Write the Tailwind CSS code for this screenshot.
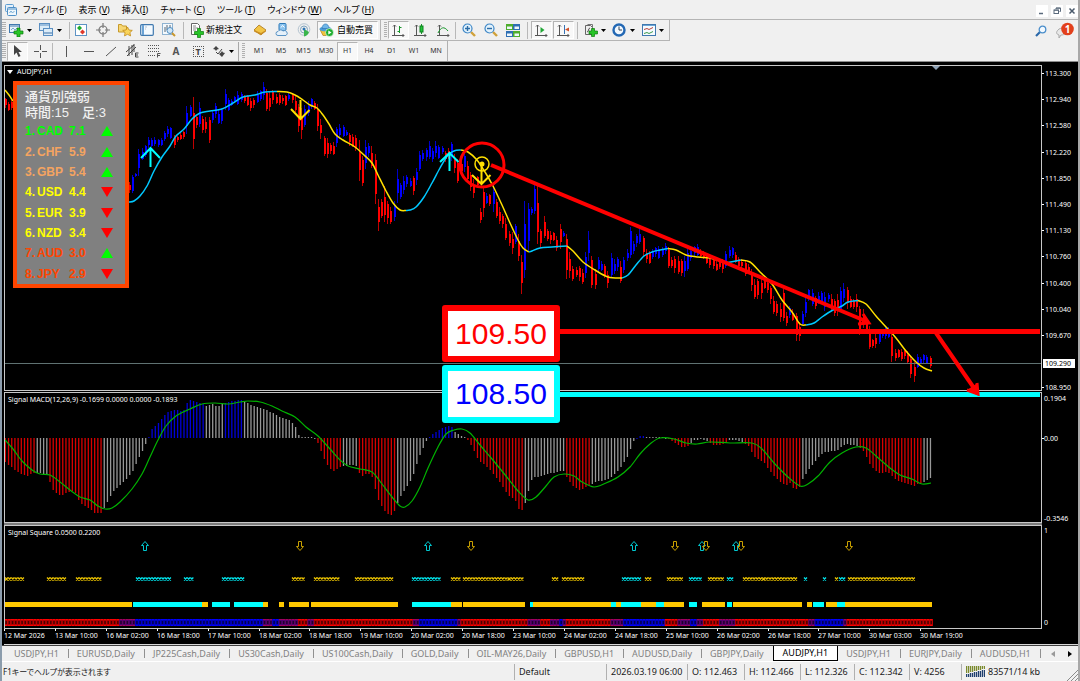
<!DOCTYPE html>
<html lang="ja">

<head>
    <meta charset="UTF-8">
    <meta name="viewport" content="width=device-width, initial-scale=1">
    <title>AUDJPY,H1</title>
    <script src="https://cdn.jsdelivr.net/npm/@tailwindcss/browser@4"></script>
</head>

<body class="h-screen overflow-hidden bg-[#f0f0f0] text-black font-['Noto_Sans','Noto_Sans_CJK_JP',sans-serif]">
<div class="h-full flex flex-col border-l-2 border-r-2 border-l-[#8b9cac] border-r-[#a8a8a8]">

    <!-- Menu bar -->
    <header class="h-[20px] shrink-0 flex items-center pl-[3px] border-b border-[#b4b4b4] bg-[#f0f0f0]">
        <svg class="w-[12px] h-[12px] mr-[6px]" viewBox="0 0 12 12" fill="none"><rect x=".5" y=".5" width="8" height="7" rx="1" fill="#e4f1fb" stroke="#5b9bd0"/><rect x="2.5" y="3.5" width="9" height="8" rx="1" fill="#eef7fd" stroke="#4f8fc6"/><path d="M3 5h8" stroke="#4f8fc6"/><path d="M4.500 9l1.500-2 1.500 2 2-2" stroke="#7aaed6"/></svg>
        <nav class="flex gap-[12px] text-[9px] leading-[12px] [font-feature-settings:'palt']">
            <button>ファイル (<u>F</u>)</button>
            <button>表示 (<u>V</u>)</button>
            <button>挿入(<u>I</u>)</button>
            <button>チャート (<u>C</u>)</button>
            <button>ツール (<u>T</u>)</button>
            <button>ウィンドウ (<u>W</u>)</button>
            <button>ヘルプ (<u>H</u>)</button>
        </nav>
        <div class="ml-auto flex gap-[3px] pt-[3px]">
            <button aria-label="最小化" class="w-[12px] h-[12px] bg-white"><svg viewBox="0 0 12 12"><path d="M3 8.500h4" stroke="#5a6a7c" stroke-width="1.500"/></svg></button>
            <button aria-label="元に戻す" class="w-[12px] h-[12px] bg-white"><svg viewBox="0 0 12 12" fill="none" stroke="#5a6a7c"><path d="M5 4V3h4.500v3.500H8.500"/><rect x="3" y="5" width="4.500" height="3.500"/><path d="M3 5.200h4.500M5 3.200h4.500"/></svg></button>
            <button aria-label="閉じる" class="w-[12px] h-[12px] bg-white"><svg viewBox="0 0 12 12"><path d="M3.500 3.500l5 5m0-5l-5 5" stroke="#4a5a6c" stroke-width="1.500"/></svg></button>
        </div>
    </header>

    <!-- Standard toolbar -->
    <div class="h-[21px] shrink-0 flex items-center justify-between">
        <div class="h-full flex items-center border-b border-r border-[#b4b4b4]">
            <span class="w-[4px] h-[16px] bg-[repeating-linear-gradient(#b0b0b0_0_1px,#f0f0f0_1px_2px)]"></span>
            <button aria-label="新規チャート" class="w-[30px] h-[20px] flex items-center pl-[3px] gap-[3px]">
                <svg class="w-[15px] h-[14px]" viewBox="0 0 15 14"><rect x=".5" y="1.500" width="10" height="8" fill="#e8f3fb" stroke="#3f78ae"/><path d="M1 3h9" stroke="#3f78ae"/><path d="M2 7l2-2 2 2 2-2" stroke="#7aa9d0" fill="none"/><path d="M8 5h3v3h3v3h-3v3H8v-3H5V8h3z" fill="#27c427" stroke="#0b7d0b" stroke-width=".7"/></svg>
                <svg class="w-[5px] h-[3px]" viewBox="0 0 5 3"><path d="M0 0h5L2.500 3z"/></svg>
            </button>
            <button aria-label="プロファイル" class="w-[30px] h-[20px] flex items-center pl-[3px] gap-[3px]">
                <svg class="w-[15px] h-[14px]" viewBox="0 0 15 14" stroke="#5a8fc2" fill="#dcecf8"><rect x=".5" y=".5" width="10" height="7"/><path d="M1 2h9"/><rect x="4.500" y="5.500" width="9" height="7"/><path d="M5 10h8" stroke="#3a6ea5"/></svg>
                <svg class="w-[5px] h-[3px]" viewBox="0 0 5 3"><path d="M0 0h5L2.500 3z"/></svg>
            </button>
            <span class="w-px h-[17px] ml-[3px] bg-[#b8b8b8]"></span>
            <button aria-label="気配値表示" class="w-[22px] h-[20px] grid place-items-center"><svg class="w-[14px] h-[14px]" viewBox="0 0 14 14"><rect x="1.500" y="1.500" width="11" height="11" fill="#fff" stroke="#5d93c4"/><path d="M3 5l2.500-2.500L8 5 5.500 7.500z" fill="#1faa2c"/><path d="M6 9l2.500-2.500L11 9l-2.500 2.500z" fill="#e0392b"/></svg></button>
            <button aria-label="データウィンドウ" class="w-[22px] h-[20px] grid place-items-center"><svg class="w-[14px] h-[14px]" viewBox="0 0 14 14" fill="none" stroke="#777" stroke-width="1.200"><circle cx="7" cy="7" r="4"/><path d="M7 0v5M7 9v5M0 7h5M9 7h5"/></svg></button>
            <button aria-label="ナビゲーター" class="w-[22px] h-[20px] grid place-items-center"><svg class="w-[15px] h-[14px]" viewBox="0 0 15 14"><path d="M.5 1.500h3l1 1.500h4v6h-8z" fill="#f7d774" stroke="#c79a2a"/><path d="M9.500 4l1.500 3 3.300.4-2.400 2.200.7 3.300-3.100-1.600-3 1.600.6-3.300-2.400-2.200L8 7z" fill="#f9d45b" stroke="#c28a16" stroke-width=".8"/></svg></button>
            <button aria-label="ターミナル" class="w-[22px] h-[20px] grid place-items-center"><svg class="w-[14px] h-[12px]" viewBox="0 0 14 12"><rect x=".7" y=".7" width="12.600" height="10.600" rx="1" fill="#f4faff" stroke="#3f78ae" stroke-width="1.200"/><path d="M3 1v10" stroke="#6aa2d4" stroke-width="2"/><path d="M5 3h2M5 5h1" stroke="#9ab" stroke-width=".7"/></svg></button>
            <button aria-label="ストラテジーテスター" class="w-[22px] h-[20px] grid place-items-center"><svg class="w-[14px] h-[14px]" viewBox="0 0 14 14" fill="none"><rect x=".5" y=".5" width="10" height="11" fill="#f4f9fd" stroke="#8fb3d1"/><path d="M3 9V4M5 7V2M8 5V2" stroke="#567"/><circle cx="8" cy="7.500" r="3" fill="#cfe6f7" stroke="#4f8cc0"/><path d="M10 10l3 3" stroke="#c9982e" stroke-width="2"/></svg></button>
            <span class="w-px h-[17px] ml-[3px] bg-[#b8b8b8]"></span>
            <button class="w-[65px] h-[20px] flex items-center pl-[6px] gap-[2px] text-[9px] leading-[12px] whitespace-nowrap">
                <svg class="w-[14px] h-[15px] shrink-0" viewBox="0 0 14 15"><path d="M1.500.5h6l2 2v9h-8z" fill="#fff" stroke="#666"/><path d="M3 3h3M3 5h5M3 7h3" stroke="#888"/><path d="M7.500 5.500h3v3h3v3h-3v3h-3v-3h-3v-3h3z" fill="#27c427" stroke="#0b7d0b" stroke-width=".7"/></svg>
                新規注文
            </button>
            <button aria-label="メタエディター" class="w-[22px] h-[20px] grid place-items-center"><svg class="w-[14px] h-[12px]" viewBox="0 0 14 12"><path d="M1 6l5-5 7 5-5 5z" fill="#f3c544" stroke="#a8741a" stroke-width=".8"/><path d="M1 6l7 3 5-3v1.500L8 11 1 7.500z" fill="#c98e25"/></svg></button>
            <button aria-label="コミュニティ" class="w-[22px] h-[20px] grid place-items-center"><svg class="w-[14px] h-[14px]" viewBox="0 0 14 14"><rect x="4" y=".5" width="7" height="7" rx="1" fill="#8cc4ef" stroke="#2c79b8"/><path d="M6 4.500l1.500-2 2 2" stroke="#fff" fill="none"/><path d="M3 12.500a2 2 0 010-4 3 3 0 015-.5 2.500 2.500 0 013 4.500z" fill="#e6f1fa" stroke="#5a93c4"/></svg></button>
            <button aria-label="シグナル" class="w-[22px] h-[20px] grid place-items-center"><svg class="w-[14px] h-[14px]" viewBox="0 0 14 14" fill="none"><circle cx="7" cy="6.500" r="5.800" stroke="#b4c4d0"/><circle cx="7" cy="6.500" r="3.500" stroke="#7fa3bd"/><path d="M7 6v7.500a7 7 0 005-4.500z" fill="#39b54a"/><circle cx="7" cy="6" r="1.500" fill="#2c74b3"/></svg></button>
            <button class="w-[61px] h-[18px] ml-[2px] mr-[2px] flex items-center pl-px gap-[3px] text-[9px] leading-[12px] whitespace-nowrap bg-[#f8f8f8] border border-[#b4b4b4] border-b-white border-r-white">
                <svg class="w-[15px] h-[14px] shrink-0" viewBox="0 0 15 14"><path d="M1 6.500h11l-2 6H4z" fill="#f0c23c" stroke="#b4841a" stroke-width=".7"/><ellipse cx="6.500" cy="6" rx="6" ry="2.300" fill="#4b9cd8"/><path d="M3 5.500c0-6 7-6 7 0z" fill="#6fb6e8" stroke="#2f78b4" stroke-width=".7"/><circle cx="10.500" cy="9.500" r="4" fill="#1fae2f" stroke="#fff" stroke-width=".6"/><path d="M9.300 7.500v4l3.200-2z" fill="#fff"/></svg>
                自動売買
            </button>
        </div>
        <div class="h-full flex items-center border-b border-r border-[#b4b4b4] mr-auto pl-[3px]">
            <span class="w-[3px] h-[16px] mr-px bg-[repeating-linear-gradient(#b0b0b0_0_1px,#f0f0f0_1px_2px)]"></span>
            <button aria-label="バーチャート" class="w-[21px] h-[18px] grid place-items-center bg-[#f8f8f8] border border-[#b4b4b4] border-b-white border-r-white"><svg class="w-[13px] h-[13px]" viewBox="0 0 13 13" fill="none" stroke="#555"><path d="M2.500 1v10.500M0 11.500h12M1 2.500l1.500-1.500L4 2.500M10.500 10l1.500 1.500-1.500 1.500"/><path d="M7.500 2v7M7.500 3.500h2M5.500 7.500h2" stroke="#17962a"/></svg></button>
            <button aria-label="ローソク足" class="w-[23px] h-[20px] grid place-items-center"><svg class="w-[13px] h-[13px]" viewBox="0 0 13 13" fill="none" stroke="#555"><path d="M2.500 1v10.500M0 11.500h12M1 2.500l1.500-1.500L4 2.500M10.500 10l1.500 1.500-1.500 1.500"/><path d="M7.500 0v10" stroke="#17962a"/><rect x="6" y="2" width="3" height="6" fill="#22c53a" stroke="#0e7f1e"/></svg></button>
            <button aria-label="ラインチャート" class="w-[22px] h-[20px] grid place-items-center"><svg class="w-[13px] h-[13px]" viewBox="0 0 13 13" fill="none" stroke="#555"><path d="M2.500 1v10.500M0 11.500h12M1 2.500l1.500-1.500L4 2.500M10.500 10l1.500 1.500-1.500 1.500"/><path d="M1 9c3-6 6-7 10-2" stroke="#17962a"/></svg></button>
            <span class="w-px h-[17px] mx-px bg-[#b8b8b8]"></span>
            <button aria-label="ズームイン" class="w-[23px] h-[20px] grid place-items-center"><svg class="w-[14px] h-[14px]" viewBox="0 0 14 14" fill="none"><path d="M9 9l4 4" stroke="#d0a13a" stroke-width="2.400"/><circle cx="5.500" cy="5.500" r="4.500" fill="#e2f2fc" stroke="#3d86c6" stroke-width="1.200"/><path d="M3 5.500h5M5.500 3v5" stroke="#2b6ca6" stroke-width="1.400"/></svg></button>
            <button aria-label="ズームアウト" class="w-[22px] h-[20px] grid place-items-center"><svg class="w-[14px] h-[14px]" viewBox="0 0 14 14" fill="none"><path d="M9 9l4 4" stroke="#d0a13a" stroke-width="2.400"/><circle cx="5.500" cy="5.500" r="4.500" fill="#e2f2fc" stroke="#3d86c6" stroke-width="1.200"/><path d="M3 5.500h5" stroke="#2b6ca6" stroke-width="1.400"/></svg></button>
            <button aria-label="整列" class="w-[22px] h-[20px] grid place-items-center"><svg class="w-[14px] h-[13px]" viewBox="0 0 14 13"><path d="M0 0h7v6H0z" fill="#4fae2d"/><path d="M7 0h7v6H7z" fill="#2f6fb4"/><path d="M0 7h7v6H0z" fill="#2f6fb4"/><path d="M7 7h7v6H7z" fill="#4fae2d"/><path d="M1 2.500h5V5H1zM8.500 2.500h4.500V5H8.500zM1 9.500h5V12H1zM8.500 9.500h4.500V12H8.500z" fill="#eef6fb"/></svg></button>
            <span class="w-px h-[17px] mx-[3px] bg-[#b8b8b8]"></span>
            <button aria-label="自動スクロール" class="w-[21px] h-[18px] grid place-items-center bg-[#f8f8f8] border border-[#b4b4b4] border-b-white border-r-white"><svg class="w-[13px] h-[13px]" viewBox="0 0 13 13" fill="none" stroke="#555"><path d="M2.500 1v10.500M0 11.500h12M1 2.500l1.500-1.500L4 2.500M10.500 10l1.500 1.500-1.500 1.500"/><path d="M5.500 3v6l4-3z" fill="#22a737" stroke="none"/></svg></button>
            <button aria-label="チャートシフト" class="w-[21px] h-[18px] ml-px grid place-items-center bg-[#f8f8f8] border border-[#b4b4b4] border-b-white border-r-white"><svg class="w-[13px] h-[13px]" viewBox="0 0 13 13" fill="none" stroke="#555"><path d="M2.500 1v10.500M0 11.500h12M1 2.500l1.500-1.500L4 2.500M10.500 10l1.500 1.500-1.500 1.500"/><path d="M7.500 1v9" stroke="#3672b5"/><path d="M12 3.500v4l-4-2z" fill="#d0502a" stroke="none"/></svg></button>
            <span class="w-px h-[17px] ml-[3px] mr-px bg-[#b8b8b8]"></span>
            <button aria-label="インディケータ" class="w-[30px] h-[20px] flex items-center pl-[5px] gap-[3px]">
                <svg class="w-[14px] h-[14px] shrink-0" viewBox="0 0 14 14"><path d="M3.500 1.500h5v3" fill="none" stroke="#777"/><path d="M1.500 2.500h5l2 2v7h-7z" fill="#eee" stroke="#666"/><path d="M3 9c2 0 1-4 3-4" fill="none" stroke="#555"/><path d="M7.500 5.500h3v2.500h3v3h-3v2.500h-3V11h-2.500V8h2.500z" fill="#27c427" stroke="#0b7d0b" stroke-width=".7"/></svg>
                <svg class="w-[5px] h-[3px]" viewBox="0 0 5 3"><path d="M0 0h5L2.500 3z"/></svg>
            </button>
            <button aria-label="時間足" class="w-[30px] h-[20px] flex items-center pl-[3px] gap-[4px]">
                <svg class="w-[14px] h-[14px] shrink-0" viewBox="0 0 14 14" fill="none"><circle cx="7" cy="7" r="5.500" fill="#f3f9ff" stroke="#2368b4" stroke-width="2.400"/><path d="M7 3.500V7h3" stroke="#345"/></svg>
                <svg class="w-[5px] h-[3px]" viewBox="0 0 5 3"><path d="M0 0h5L2.500 3z"/></svg>
            </button>
            <button aria-label="定型チャート" class="w-[30px] h-[20px] flex items-center pl-[3px] gap-[3px]">
                <svg class="w-[14px] h-[12px] shrink-0" viewBox="0 0 14 12" fill="none"><rect x=".5" y=".5" width="13" height="11" fill="#f6fbff" stroke="#3f78ae"/><path d="M1 1.500h12" stroke="#6ba5d6"/><path d="M2 5.500l3-1 2 1 4-2" stroke="#b4403a"/><path d="M2 9.500l3-1 2 1 4-2" stroke="#3a9a4a"/></svg>
                <svg class="w-[5px] h-[3px]" viewBox="0 0 5 3"><path d="M0 0h5L2.500 3z"/></svg>
            </button>
        </div>
        <div class="flex items-center gap-[9px] pr-[4px]">
            <button aria-label="検索"><svg class="w-[12px] h-[12px]" viewBox="0 0 12 12" fill="none"><path d="M1 11l4-4" stroke="#2a67a8" stroke-width="2.200"/><circle cx="7.500" cy="4.500" r="3.300" fill="#f2f9ff" stroke="#4b8ecb" stroke-width="1.300"/></svg></button>
            <button aria-label="通知" class="relative w-[18px] h-[17px]">
                <svg class="w-[18px] h-[17px]" viewBox="0 0 18 17"><path d="M2 8c2-3 9-2 8 2-1 3-4 3-5 3l-2 3v-3C0 12 0 10 2 8z" fill="#e8e8e8" stroke="#aaa"/><circle cx="11.500" cy="7" r="6.300" fill="#e2401c"/></svg>
                <span class="absolute left-[5px] top-0 w-[13px] text-center text-[10px] leading-[14px] font-bold text-white">1</span>
            </button>
        </div>
    </div>

    <!-- Line studies and timeframes -->
    <div class="h-[20px] shrink-0 flex items-center text-[7px] text-[#333]">
        <span class="w-[4px] h-[16px] bg-[repeating-linear-gradient(#b0b0b0_0_1px,#f0f0f0_1px_2px)]"></span>
        <button aria-label="カーソル" class="w-[21px] h-[19px] ml-px grid place-items-center bg-[#f8f8f8] border border-[#b4b4b4] border-b-white border-r-white"><svg class="w-[9px] h-[12px]" viewBox="0 0 9 12"><path d="M1 0v10l2.500-2.500L5.500 12l2-1L5.500 7H9z" fill="#444"/></svg></button>
        <button aria-label="十字線" class="w-[24px] h-[20px] grid place-items-center"><svg class="w-[13px] h-[13px]" viewBox="0 0 13 13" stroke="#555"><path d="M6.500 0v5M6.500 8v5M0 6.500h5M8 6.500h5"/></svg></button>
        <span class="w-px h-[17px] mr-[2px] bg-[#b8b8b8]"></span>
        <button aria-label="垂直線" class="w-[22px] h-[20px] grid place-items-center"><svg class="w-[11px] h-[11px]" viewBox="0 0 11 11" stroke="#555"><path d="M5.500 0v11"/></svg></button>
        <button aria-label="水平線" class="w-[22px] h-[20px] grid place-items-center"><svg class="w-[11px] h-[11px]" viewBox="0 0 11 11" stroke="#555"><path d="M1 5.500h10"/></svg></button>
        <button aria-label="トレンドライン" class="w-[22px] h-[20px] grid place-items-center"><svg class="w-[11px] h-[11px]" viewBox="0 0 11 11" stroke="#555"><path d="M1 10L11 1"/></svg></button>
        <button aria-label="等距離チャネル" class="w-[22px] h-[20px] grid place-items-center"><svg class="w-[13px] h-[14px]" viewBox="0 0 13 14" fill="none" stroke="#444"><path d="M0 8l8-7M1 12l9-9M3 2v10M6 1v10M8 0v8"/><path d="M12.500 9h-3v4h3M9.500 11h2.500"/></svg></button>
        <button aria-label="フィボナッチ" class="w-[22px] h-[20px] grid place-items-center"><svg class="w-[13px] h-[14px]" viewBox="0 0 13 14" fill="none" stroke="#555"><path d="M0 1.500h12M0 4.500h12M0 7.500h12M0 11.500h7" stroke-dasharray="1 1"/><path d="M12.500 9.500h-3v4M9.500 11.500h2.500"/></svg></button>
        <button aria-label="テキスト" class="w-[22px] h-[20px] text-[10px] leading-[14px] font-bold text-[#555]">A</button>
        <button aria-label="ラベル" class="w-[22px] h-[20px] grid place-items-center"><span class="w-[11px] h-[11px] border border-dotted border-[#555] text-[9px] leading-[9px] font-bold text-[#444]">T</span></button>
        <button aria-label="矢印" class="w-[28px] h-[20px] flex items-center pl-[4px] gap-[4px]">
            <svg class="w-[12px] h-[11px]" viewBox="0 0 12 11" fill="#444"><path d="M0 3l3-3 3 3-2 .5L3 5 2 3.500zM6 8l2-1.500L9 5l1 1.500 2 .5-3 4z"/><path d="M3 6l2 2 4-5" fill="none" stroke="#444"/></svg>
            <svg class="w-[5px] h-[3px]" viewBox="0 0 5 3"><path d="M0 0h5L2.500 3z"/></svg>
        </button>
        <span class="w-px h-[19px] ml-px bg-[#a8a8a8]"></span>
        <span class="w-[3px] h-[16px] mx-[3px] bg-[repeating-linear-gradient(#b0b0b0_0_1px,#f0f0f0_1px_2px)]"></span>
        <button class="w-[22px] h-[20px]">M1</button>
        <button class="w-[22px] h-[20px]">M5</button>
        <button class="w-[23px] h-[20px]">M15</button>
        <button class="w-[22px] h-[20px]">M30</button>
        <button class="w-[21px] h-[19px] bg-[#f8f8f8] border border-[#b4b4b4] border-b-white border-r-white">H1</button>
        <button class="w-[22px] h-[20px]">H4</button>
        <button class="w-[23px] h-[20px]">D1</button>
        <button class="w-[22px] h-[20px]">W1</button>
        <button class="w-[22px] h-[20px]">MN</button>
        <span class="w-px h-[20px] bg-[#b0b0b0]"></span>
    </div>

    <!-- Chart window -->
    <main class="relative flex-1 min-h-0 flex flex-col bg-black border-t border-[#8c8c8c] pt-[3px] pl-[2px] text-[7px] leading-[10px] text-white">
        <section class="relative flex-1 min-h-0 flex">
            <svg id="price" class="flex-1 min-w-0 h-full border border-[#c8c8c8]"></svg>
            <svg id="priceAxis" class="w-[36px] h-full overflow-visible" fill="#fff"></svg>
            <h1 class="absolute left-[3px] top-[2px] flex items-center gap-[4px]"><svg class="w-[6px] h-[4px]" viewBox="0 0 6 4"><path d="M0 0h6L3 4z" fill="#fff"/></svg>AUDJPY,H1</h1>
        </section>
        <section class="relative h-[131px] mt-px shrink-0 flex">
            <svg id="macd" class="flex-1 min-w-0 h-full border border-[#c8c8c8]"></svg>
            <svg id="macdAxis" class="w-[36px] h-full" fill="#fff"></svg>
            <h2 class="absolute left-[4px] top-[3px]">Signal MACD(12,26,9) -0.1699 0.0000 0.0000 -0.1893</h2>
        </section>
        <div class="h-[2px] shrink-0 mr-[36px] bg-[#7c7c7c]"></div>
        <section class="relative h-[104px] shrink-0 flex">
            <svg id="square" class="flex-1 min-w-0 h-full border border-[#c8c8c8]"></svg>
            <svg id="squareAxis" class="w-[36px] h-full" fill="#fff"></svg>
            <h2 class="absolute left-[4px] top-[3px]">Signal Square 0.0500 0.2200</h2>
        </section>
        <svg id="timeAxis" class="w-full h-[16px] shrink-0 border-b border-[#d8d8d8]" fill="#fff"></svg>

        <!-- Drawn objects over the panes -->
        <svg class="absolute inset-0 w-full h-full pointer-events-none" fill="none">
            <g transform="translate(-2 -62)">
                <path d="M558 331.500H1040" stroke="#f00" stroke-width="5"/>
                <path d="M558 394.500H1040" stroke="#0ff" stroke-width="5"/>
                <path d="M491 165L868 322" stroke="#f00" stroke-width="4"/>
                <path d="M863 314l6 9-11 1" stroke="#f00" stroke-width="3"/><path d="M865 316l5 8-9-1z" fill="#f00"/>
                <path d="M936 333l40 58" stroke="#f00" stroke-width="4"/>
                <path d="M977 383l1 11-11-4" stroke="#f00" stroke-width="3"/><path d="M976 384l3 12-12-6z" fill="#f00"/>
                <circle cx="482" cy="165" r="22" stroke="#f00" stroke-width="3"/>
                <circle cx="482" cy="164" r="7" stroke="#ffe000" stroke-width="1.500"/>
                <circle cx="482" cy="164" r="2.500" fill="#ffe000"/>
                <path d="M481.500 165v18M472 175l9.500 9 9-9" stroke="#ffe000" stroke-width="2"/>
                <path d="M300.500 100v19M291 109l9.500 10 9-9" stroke="#ffe000" stroke-width="2"/>
                <path d="M150.500 167v-19M141 158l9.500-10 9.500 10" stroke="#0ff" stroke-width="2"/>
                <path d="M449.500 171v-18M440 162l9.500-9 9 9" stroke="#0ff" stroke-width="2"/>
            </g>
        </svg>
        <div class="absolute left-[440px] top-[243px] w-[118px] h-[57px] rounded-[3px] border-[6px] border-[#ff0000] bg-white text-center text-[30px] leading-[46px] text-[#ff0000] font-['Liberation_Sans',sans-serif]">109.50</div>
        <div class="absolute left-[440px] top-[303px] w-[118px] h-[58px] rounded-[3px] border-[6px] border-[#00ffff] bg-white text-center text-[30px] leading-[46px] text-[#0000ff] font-['Liberation_Sans',sans-serif]">108.50</div>

        <!-- Currency strength -->
        <aside class="absolute left-[11px] top-[19px] w-[116px] h-[207px] pt-[4px] pl-[8px] pr-[12px] flex flex-col border-4 border-[#ff4500] bg-[#808080] font-['Liberation_Sans','Noto_Sans_CJK_JP',sans-serif] text-[12px]">
            <p class="text-[13px] leading-[16px] font-medium text-[#f0f0f0] whitespace-nowrap">通貨別強弱</p>
            <p class="text-[13px] leading-[16px] font-medium text-[#f0f0f0] whitespace-nowrap">時間:15　足:3</p>
            <table class="flex-1 table-fixed font-bold leading-[14px]">
                <tbody id="strength"></tbody>
            </table>
        </aside>
    </main>

    <!-- Chart tabs -->
    <nav class="h-[16px] shrink-0 flex items-stretch border-t border-[#404040] pl-[4px] text-[9px] leading-[14px] text-[#808080] whitespace-nowrap overflow-hidden">
        <div id="tabs" class="flex items-stretch"></div>
        <div class="ml-auto w-[34px] shrink-0 flex items-center justify-around">
            <button aria-label="前へ"><svg class="w-[4px] h-[6px]" viewBox="0 0 4 6"><path d="M4 0v6L0 3z" fill="#999"/></svg></button>
            <button aria-label="次へ"><svg class="w-[4px] h-[6px]" viewBox="0 0 4 6"><path d="M0 0v6l4-3z"/></svg></button>
        </div>
    </nav>

    <!-- Status bar -->
    <footer class="h-[20px] shrink-0 flex items-center border-t border-white text-[9px] leading-[16px] text-[#1a1a1a] whitespace-nowrap">
        <span class="flex-1 pl-px text-[8px] [font-feature-settings:'palt']">F1キーでヘルプが表示されます</span>
        <span class="w-[92px] pl-[4px] border-l border-[#b0b0b0]">Default</span>
        <span class="w-[81px] pl-[4px] border-l border-[#b0b0b0]">2026.03.19 06:00</span>
        <span class="w-[57px] pl-[4px] border-l border-[#b0b0b0]">O: 112.463</span>
        <span class="w-[56px] pl-[4px] border-l border-[#b0b0b0]">H: 112.466</span>
        <span class="w-[54px] pl-[4px] border-l border-[#b0b0b0]">L: 112.326</span>
        <span class="w-[55px] pl-[4px] border-l border-[#b0b0b0]">C: 112.342</span>
        <span class="w-[52px] pl-[4px] border-l border-[#b0b0b0]">V: 4256</span>
        <span class="w-[105px] pl-[4px] flex items-center gap-[3px] border-l border-[#b0b0b0]">
            <svg class="w-[19px] h-[11px]" viewBox="0 0 19 11"><path d="M.5 0v7M2.500 0v7M4.500 0v6M6.500 0v6M8.500 0v5M10.500 0v5M12.500 0v4M14.500 0v4M16.500 0v3M18.500 0v3" stroke="#7a8a2c" stroke-width="1.300"/><path d="M.5 11V8M2.500 11V8M4.500 11V7M6.500 11V7M8.500 11V6M10.500 11V6M12.500 11V5M14.500 11V5M16.500 11V4M18.500 11V4" stroke="#1f3f6e" stroke-width="1.300"/></svg>
            83571/14 kb
        </span>
        <svg class="w-[12px] h-[12px] self-end" viewBox="0 0 12 12" stroke="#8a8a8a"><path d="M1 12L12 1M5 12l7-7M9 12l3-3"/></svg>
    </footer>
</div>

<script>
  const STEP = 3.19;
  const barX = i => 5 + i * STEP;

  // one entry per bar: direction, high, low (in chart rows)
  const firstBars = 'r98-108 r102-111 r100-110';
  const bars = `r182-193 b175-193 b173-177 b149-176 b148-160 b145-157 b137-148 b138-147 b137-146 b139-147 b138-146 b131-141
    b126-137 b127-139 r135-148 r136-142 r133-140 r131-139 b106-134 b105-117 r97-149 r116-128 b102-127 r116-133 r117-133 r117-143
    b110-123 b103-118 b110-124 b108-124 b89-110 b98-111 b99-106 b96-103 b91-105 b92-102 r95-103 r95-106 r98-111 r98-108 b91-103
    b90-101 b82-100 r89-111 r92-111 r90-104 r94-104 r93-105 r95-104 r95-106 b93-101 r93-103 r96-112 r104-132 r108-139 b105-127
    b101-116 b98-109 r101-110 r104-131 r119-139 r136-156 r138-158 r143-154 r142-155 b127-147 b124-139 b125-137 b130-136 r133-146
    r134-147 r135-151 r140-181 r156-186 b140-169 b143-157 r146-168 r154-204 r199-231 r199-218 r186-222 r201-224 r207-224 b201-221
    b169-203 b183-199 b176-194 b175-187 b178-187 r176-195 b168-185 b151-171 b150-161 b148-161 b141-159 b148-162 b141-157 b145-159
    b146-154 r151-162 r148-159 b142-161 r154-173 r159-183 r159-174 b154-172 r161-181 r172-191 r179-198 r176-186 r208-223 r186-217
    b193-204 r194-206 b185-212 r199-218 r207-224 r214-228 r218-240 r231-246 r232-254 b224-244 r234-261 r255-294 b201-278 b203-251
    b207-215 b183-214 r185-244 r229-248 r216-238 r229-241 r231-244 r232-241 r236-251 r224-249 b231-237 r234-279 r252-278 r266-281
    r267-277 r266-281 r269-284 b252-278 b231-261 r256-288 r269-289 b257-273 b261-271 r264-278 r271-288 b253-278 b259-274 b257-271
    r261-283 b257-273 b249-261 b227-258 b241-254 b234-247 b229-244 r236-256 r249-263 r251-264 b249-259 b247-257 b246-259 b247-257
    b243-254 r247-268 r257-268 r256-273 r256-274 r259-276 b256-277 b249-271 b247-261 b246-256 b244-256 r249-258 r251-259 r254-264
    r254-268 r257-269 r261-271 r261-269 r259-273 b251-268 b246-258 b247-258 r252-263 r257-268 r259-269 r261-276 r264-274 r269-291
    r279-299 r279-299 r277-299 r277-289 r279-293 r286-304 r296-314 r301-316 r303-322 r289-321 r312-326 b306-318 r309-321 r313-341
    r322-341 b311-326 b296-317 b289-301 b289-306 r296-309 b292-304 b291-304 b292-311 b293-302 r294-311 r299-316 r294-316 b287-311
    b283-302 r287-309 r296-308 r299-309 r294-312 r306-335 r309-328 r319-334 r326-349 r339-348 r334-348 b329-344 b329-338 b327-339
    b327-338 r332-362 r349-361 r349-358 r349-361 r349-359 r351-363 r356-378 r362-382 b354-368 b357-364 b354-363 b355-364 r356-368`;

  const drawBar = (token, i) => {
    const color = token[0] === 'r' ? '#ff0000' : '#0000ff';
    const wick = token[0] === 'r' ? '#c00000' : '#0000c8';
    const [hi, lo] = token.slice(1).split('-').map(Number);
    const range = lo - hi;
    const top = hi + Math.round(range * [0.12, 0.25, 0.18, 0.3][i % 4]);
    const bottom = lo - Math.round(range * [0.28, 0.1, 0.2][i % 3]);
    const x = Math.floor(barX(i));
    return `<path d="M${x + 0.5} ${hi}V${lo}" stroke="${wick}"/><rect x="${x}" y="${top}" width="2" height="${bottom - top}" fill="${color}"/>`;
  };

  // moving average, coloured by slope
  const average = [
    ['#ffe000', '5,90 9,95 13,101'],
    ['#00c8ff', '129,202 134,201 140,196 147,186 154,171 162,157 170,146 176,136 184,129 192,119 200,113 210,111 222,109 233,103 243,97 255,95 265,92 277,91.5'],
    ['#ffe000', '277,91.5 287,92 295,95 303,100 310,105 317,108 323,115 329,124 335,134 343,140 355,147 364,155 372,163 378,175 386,191 393,203 400,210 406,210.5'],
    ['#00c8ff', '406,210.5 410,210 416,207 424,197 432,183 440,168 448,155 454,151 461,150'],
    ['#ffe000', '461,150 468,152 477,160 485,172 493,186 502,205 510,223 518,240 523,248 529,252'],
    ['#00c8ff', '529,252 532,251 540,248 552,247 567,246'],
    ['#ffe000', '567,246 573,251 583,262 595,270 608,277 622,278'],
    ['#00c8ff', '622,278 628,275 636,265 644,256 652,252 660,250 668,248.5'],
    ['#ffe000', '668,248.5 676,250 686,255 698,257 710,258 720,261 728,262.5'],
    ['#00c8ff', '728,262.5 741,260'],
    ['#ffe000', '741,260 750,262 760,272 772,284 782,300 792,312 800,324 806,325'],
    ['#00c8ff', '806,325 814,323 822,317 833,310 842,306 848,302 858,300.5'],
    ['#ffe000', '858,300.5 866,304 876,316 887,328 896,338 906,351 916,362 924,368 932,371']
  ];

  // curve through all points of the list
  const line = (points, color, width) => {
    const p = points.split(/\s+/).map(s => s.split(',').map(Number));
    let d = `M${p[0]}`;
    for (let i = 0; i < p.length - 1; i++) {
      const a = p[i - 1] || p[i], b = p[i], c = p[i + 1], e = p[i + 2] || c;
      d += `C${b[0] + (c[0] - a[0]) / 6} ${b[1] + (c[1] - a[1]) / 6} ${c[0] - (e[0] - b[0]) / 6} ${c[1] - (e[1] - b[1]) / 6} ${c}`;
    }
    return `<path d="${d}" fill="none" stroke="${color}" stroke-width="${width}"/>`;
  };

  document.getElementById('price').innerHTML = `<g transform="translate(-5 -66)">
    ${firstBars.split(' ').map(drawBar).join('')}
    ${bars.split(/\s+/).map((t, i) => drawBar(t, i + 39)).join('')}
    <path d="M5 363.500H4000" stroke="#5f7272"/>
    ${average.map(([c, p]) => line(p, c, 1.5)).join('')}
    <path d="M932 66h8l-4 4z" fill="#8fa3b8"/></g>`;

  // MACD histogram: envelope points and colour runs
  const envelope = `5,462 10,466 20,474 27,476 33,473 40,473 47,475 53,490 60,496 66,493 74,490 79,502 86,507 95,513 101,513 104,508 108,500
    115,489 125,480 132,472 138,459 143,450 146,442 148,438 151,430 158,423 166,413 172,410 183,411 188,400 198,402 206,406 212,404
    217,407 223,403 232,401 240,400 246,402 253,406 262,408 272,413 282,418 290,420 295,426 298,435 302,437 313,437 317,441 323,457
    328,467 333,471 338,468 343,466 350,465 356,466 361,477 368,473 372,477 378,500 385,512 390,516 394,511 400,497 406,487 412,478
    416,466 420,454 425,443 428,438 434,433 441,428 450,425 455,432 461,436 466,438 470,443 478,460 487,467 498,480 508,495 515,500
    520,512 524,507 527,495 532,478 540,476 552,473 563,470 568,480 574,487 580,491 587,486 595,482 606,480 612,476 620,468 628,455
    633,442 636,438 641,435 645,437 655,437 662,437 671,440 678,445 683,448 690,445 692,441 700,439 706,440 713,445 722,445 728,440
    737,440 748,445 754,457 764,463 773,475 785,486 790,483 794,490 799,488 802,480 808,470 818,457 825,452 836,451 845,444 858,446
    864,452 870,465 878,473 888,472 896,480 905,483 914,486 920,483 928,480 931,477`.split(/\s+/).map(p => p.split(',').map(Number));
  const runs = [[36, 'r'], [47, 'g'], [101, 'r'], [146, 'g'], [203, 'b'], [222, 'g'], [243, 'b'], [316, 'g'], [343, 'r'], [356, 'g'],
    [397, 'r'], [427, 'g'], [454, 'b'], [466, 'g'], [524, 'r'], [564, 'g'], [590, 'r'], [635, 'g'], [645, 'b'], [668, 'g'], [690, 'r'],
    [708, 'g'], [727, 'r'], [744, 'g'], [801, 'r'], [858, 'g'], [922, 'r'], [999, 'g']];
  const shades = { r: '#d80000', g: '#989898', b: '#0000d8' };
  const signal = `5,440 13,449 22,461 32,470 40,474 50,475 60,482 70,490 80,497 90,500 98,506 105,509 112,508 120,502 132,489 142,474 150,457
    158,440 166,426 176,416 190,409 202,404 215,403 228,404 240,402 248,401 260,402 272,406 282,411 295,417 306,427 318,436 330,449
    340,460 348,466 360,469 372,472 382,484 392,497 400,506 405,507 412,501 420,487 428,468 438,447 446,434 454,430 462,429 470,433
    480,445 492,459 506,476 518,491 528,500 536,497 546,486 554,477 564,474 574,476 582,482 594,487 606,483 618,477 630,467 640,454
    650,444 660,438 674,439 686,443 697,444 710,442 730,443 752,443 762,449 774,463 788,477 800,486 808,484 818,476 830,462 842,453
    856,447 866,448 876,456 890,468 900,475 912,479 922,484 931,483`;

  let histogram = '';
  for (let i = 0; i <= 290; i++) {
    const x = barX(i);
    let k = envelope.findIndex(p => p[0] >= x);
    if (k < 1) k = 1;
    const [x0, y0] = envelope[k - 1];
    const [x1, y1] = envelope[k];
    let y = Math.round(y0 + (y1 - y0) * (x - x0) / (x1 - x0));
    if (y === 438) y = 439;
    const kind = runs.find(r => x <= r[0])[1];
    histogram += `<rect x="${x - 0.3}" y="${Math.min(438, y)}" width="1.300" height="${Math.abs(y - 438)}" fill="${shades[kind]}"/>`;
  }
  document.getElementById('macd').innerHTML = `<g transform="translate(-5 -393)">${histogram}${line(signal, '#00b400', 1.2)}</g>`;

  // Signal Square rows
  const gold = '#ffc800';
  const up = [145, 428, 634, 702, 736];
  const down = [300, 471, 675, 706, 741, 849];
  const crosses = [
    ['#e8c000', [[5, 25], [47, 66], [76, 101], [292, 305], [314, 340], [355, 394], [451, 461], [463, 524], [552, 559], [562, 584], [645, 652], [667, 683], [708, 725], [743, 798], [835, 839], [848, 915]]],
    ['#00e4ec', [[136, 171], [184, 194], [222, 244], [412, 442], [622, 642], [689, 702], [727, 734], [804, 807], [823, 826], [839, 845]]]
  ];
  const blocks = [
    [gold, [[5, 132], [202, 208], [263, 268], [279, 284], [289, 309], [311, 398], [451, 462], [463, 525], [533, 611], [616, 621], [641, 656], [664, 684], [702, 725], [733, 802], [807, 812], [826, 837], [845, 932]]],
    ['#00ffff', [[133, 202], [212, 230], [234, 263], [412, 451], [530, 533], [611, 616], [621, 641], [656, 664], [689, 697], [727, 732], [813, 824], [837, 845]]]
  ];
  const blueRuns = [[133, 262], [270, 277], [419, 456], [559, 563], [622, 665], [689, 696], [813, 843]];
  const mixedRuns = [[118, 133], [262, 270], [277, 296], [306, 314], [413, 419], [456, 460], [528, 538], [548, 559], [563, 566], [608, 622], [678, 689], [696, 701], [717, 735], [808, 813], [843, 847]];

  let rows = '';
  up.forEach(x => rows += `<path d="M${x} 541.500l3.500 4h-2v5h-3v-5h-2z" fill="none" stroke="#00c8d0"/>`);
  down.forEach(x => rows += `<path d="M${x} 550.500l3.500-4h-2v-5h-3v5h-2z" fill="none" stroke="#c8a000"/>`);
  crosses.forEach(([color, list]) => list.forEach(([a, b]) => {
    for (let x = a; x <= b - 2; x += STEP) rows += `<path d="M${x} 577.500l3 3m0-3l-3 3" stroke="${color}" stroke-width="1.300"/>`;
  }));
  blocks.forEach(([color, list]) => list.forEach(([a, b]) => rows += `<rect x="${a}" y="602" width="${b - a}" height="5" fill="${color}"/>`));
  for (let i = 0; i <= 290; i++) {
    const x = barX(i);
    const inside = list => list.some(([a, b]) => x >= a && x < b);
    const fill = inside(blueRuns) ? '#0000c0' : inside(mixedRuns) ? '#500070' : '#b40000';
    const ring = inside(blueRuns) ? '#0000ff' : inside(mixedRuns) ? '#a00060' : '#ff0000';
    rows += `<rect x="${x - 0.5}" y="619" width="3.200" height="7" fill="${ring}"/><rect x="${x - 0.5}" y="620" width="3.200" height="5" fill="${fill}"/><rect x="${x + 0.4}" y="621" width="1.500" height="3" fill="#000" opacity=".6"/>`;
  }
  document.getElementById('square').innerHTML = `<g transform="translate(-5 -526)">${rows}</g>`;

  // Axes
  const prices = ['113.300', '112.940', '112.580', '112.220', '111.850', '111.490', '111.130', '110.760', '110.400', '110.040', '109.670', null, '108.950'];
  document.getElementById('priceAxis').innerHTML = prices.map((p, i) => {
    const y = Math.round(8 + i * 26.200);
    return p ? `<path d="M0 ${y + 0.5}h2" stroke="#fff"/><text x="3" y="${y + 3}">${p}</text>` : '';
  }).join('') + '<rect x="1" y="294" width="32" height="9"/><text x="3" y="301" fill="#000">109.290</text>';
  document.getElementById('macdAxis').innerHTML = '<text x="2" y="9">0.1904</text><path d="M0 46.500h2" stroke="#fff"/><text x="2" y="49">0.00</text><text x="2" y="129">-0.3546</text>';
  document.getElementById('squareAxis').innerHTML = '<text x="2" y="8">1</text><text x="2" y="100">0</text>';
  const times = ['12 Mar 2026', '13 Mar 10:00', '16 Mar 02:00', '16 Mar 18:00', '17 Mar 10:00', '18 Mar 02:00', '18 Mar 18:00', '19 Mar 10:00', '20 Mar 02:00', '20 Mar 18:00', '23 Mar 10:00', '24 Mar 02:00', '24 Mar 18:00', '25 Mar 10:00', '26 Mar 02:00', '26 Mar 18:00', '27 Mar 10:00', '30 Mar 03:00', '30 Mar 19:00'];
  document.getElementById('timeAxis').innerHTML = times.map((t, i) => {
    const x = Math.round(i * 50.9);
    return `<path d="M${x + 0.5} 0v2" stroke="#fff"/><text x="${x}" y="9">${t}</text>`;
  }).join('');

  // Currency strength table
  const strength = [
    ['CAD', '7.1', 'up', '#00ff00'], ['CHF', '5.9', 'up', '#f4a460'], ['GBP', '5.4', 'up', '#f4a460'], ['USD', '4.4', 'down', '#ffff00'],
    ['EUR', '3.9', 'down', '#ffff00'], ['NZD', '3.4', 'down', '#ffff00'], ['AUD', '3.0', 'up', '#ff4500'], ['JPY', '2.9', 'down', '#ff4500']
  ];
  document.getElementById('strength').innerHTML = strength.map(([name, value, trend, color], i) => `
    <tr style="color:${color}">
      <td class="w-[12px]">${i + 1}.</td>
      <td class="w-[32px]">${name}</td>
      <td class="w-[32px]">${value}</td>
      <td><svg class="w-[12px] h-[10px]" viewBox="0 0 12 10"><path d="${trend === 'up' ? 'M0 10h12L6 0z' : 'M0 0h12L6 10z'}" fill="${trend === 'up' ? '#00ff00' : '#ff0000'}"/></svg></td>
    </tr>`).join('');

  // Tabs
  const tabs = ['USDJPY,H1', 'EURUSD,Daily', 'JP225Cash,Daily', 'US30Cash,Daily', 'US100Cash,Daily', 'GOLD,Daily', 'OIL-MAY26,Daily', 'GBPUSD,H1', 'AUDUSD,Daily', 'GBPJPY,Daily', 'AUDJPY,H1', 'USDJPY,H1', 'EURJPY,Daily', 'AUDUSD,H1'];
  document.getElementById('tabs').innerHTML = tabs.map((t, i) => {
    if (i === 10) return `<button class="px-[9px] bg-white text-black border border-t-0 border-black">${t}</button>`;
    return `<button class="pl-[8px] pr-[9px] flex items-center">${t}</button>${i === 9 ? '' : '<span class="w-px my-[3px] bg-[#909090]"></span>'}`;
  }).join('');
</script>
</body>

</html>
